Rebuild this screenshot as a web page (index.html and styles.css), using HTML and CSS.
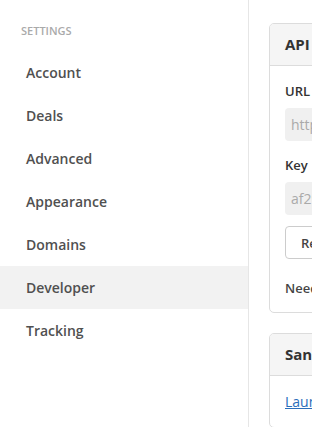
FILE: index.html
```html
<!DOCTYPE html>
<html>
<head>
<meta charset="utf-8">
<link rel="stylesheet" href="styles.css">
</head>
<body>
<div class="layout">
  <nav class="sidebar">
    <div class="sidebar-title">Settings</div>
    <a class="nav-item">Account</a>
    <a class="nav-item">Deals</a>
    <a class="nav-item">Advanced</a>
    <a class="nav-item">Appearance</a>
    <a class="nav-item">Domains</a>
    <a class="nav-item active">Developer</a>
    <a class="nav-item">Tracking</a>
  </nav>
  <main class="content">
    <section class="card">
      <header class="card-header">API</header>
      <div class="card-body">
        <label class="field-label">URL</label>
        <input class="field-input" type="text" value="https://api.example.com/v1" disabled>
        <label class="field-label">Key</label>
        <input class="field-input" type="text" value="af29c8e1b4d07a6f3e5c" disabled>
        <button class="btn">Regenerate key</button>
        <p class="help">Need help? Read the API documentation.</p>
      </div>
    </section>
    <section class="card">
      <header class="card-header">Sandbox</header>
      <div class="card-body">
        <a class="link" href="#">Launch sandbox mode</a>
      </div>
    </section>
  </main>
</div>
</body>
</html>
```

FILE: styles.css
```css
html, body {
  margin: 0;
  padding: 0;
  background: #fff;
  overflow: hidden;
}
body {
  font-family: "Open Sans", "Liberation Sans", sans-serif;
  color: #555;
}
.layout {
  display: flex;
  min-height: 427px;
  width: 312px;
  overflow: hidden;
}
.sidebar {
  flex: 0 0 248px;
  border-right: 1px solid #e6e6e6;
  display: flex;
  flex-direction: column;
  padding-top: 23px;
}
.sidebar-title {
  font-size: 11px;
  font-weight: 600;
  text-transform: uppercase;
  color: #aaa;
  line-height: 16px;
  padding-left: 21px;
  margin-bottom: 12px;
}
.nav-item {
  display: block;
  height: 43px;
  line-height: 43px;
  padding-left: 26px;
  font-size: 14px;
  font-weight: 600;
  color: #505050;
}
.nav-item.active {
  background: #f2f2f2;
}
.content {
  flex: 0 0 auto;
  width: 500px;
  padding: 23px 20px 20px 20px;
  display: flex;
  flex-direction: column;
  gap: 20px;
}
.card {
  border: 1px solid #dcdcdc;
  border-radius: 5px;
  overflow: hidden;
}
.card-header {
  background: #f5f5f5;
  border-bottom: 1px solid #dcdcdc;
  height: 41px;
  line-height: 41px;
  padding-left: 15px;
  font-size: 15px;
  font-weight: 700;
  color: #333;
}
.card-body {
  padding: 16px 15px 15px 15px;
  display: flex;
  flex-direction: column;
  align-items: flex-start;
}
.field-label {
  font-size: 13px;
  font-weight: 600;
  color: #333;
  line-height: 18px;
  margin-bottom: 8px;
}
.field-input {
  box-sizing: border-box;
  width: 400px;
  height: 33px;
  border: 0;
  border-radius: 4px;
  background: #f0f0f0;
  padding: 0 6px;
  font-family: inherit;
  font-size: 14px;
  color: #aaa;
  margin-bottom: 15px;
}
.btn {
  box-sizing: border-box;
  height: 33px;
  padding: 0 15px;
  background: #fff;
  border: 1px solid #ccc;
  border-radius: 4px;
  font-family: inherit;
  font-size: 13px;
  font-weight: 600;
  color: #444;
  margin-top: -4px;
  margin-bottom: 20px;
}
.help {
  margin: 0;
  font-size: 13px;
  font-weight: 600;
  color: #444;
  line-height: 18px;
}
.link {
  font-size: 14px;
  color: #2a6ebb;
  text-decoration: underline;
  line-height: 20px;
}
```
